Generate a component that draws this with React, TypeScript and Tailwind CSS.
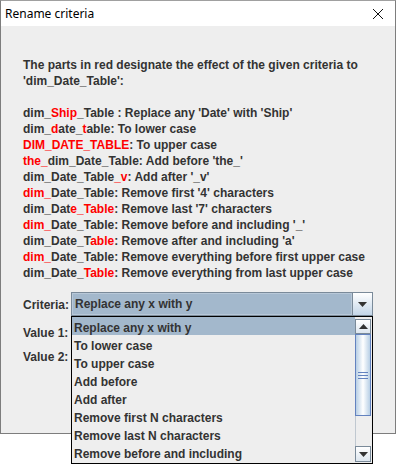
import React from 'react';

const R = ({ children }: { children: React.ReactNode }) => <span className="text-[#ff0000]">{children}</span>;

function Tri({ up }: { up?: boolean }) {
  return (
    <svg width="9" height="5" viewBox="0 0 9 5" className="block">
      {up ? <path d="M0 5 L4.5 0 L9 5 Z" fill="#333" /> : <path d="M0 0 L9 0 L4.5 5 Z" fill="#333" />}
    </svg>
  );
}

export default function App() {
  const lines: React.ReactNode[] = [
    <>dim_<R>Ship</R>_Table : Replace any 'Date' with 'Ship'</>,
    <>dim_<R>d</R>ate_<R>t</R>able: To lower case</>,
    <><R>DIM_DATE_TABLE</R>: To upper case</>,
    <><R>the_</R>dim_Date_Table: Add before 'the_'</>,
    <>dim_Date_Table<R>_v</R>: Add after '_v'</>,
    <><R>dim_</R>Date_Table: Remove first '4' characters</>,
    <>dim_Dat<R>e_Table</R>: Remove last '7' characters</>,
    <><R>dim_</R>Date_Table: Remove before and including '_'</>,
    <>dim_Date_T<R>able</R>: Remove after and including 'a'</>,
    <><R>dim_</R>Date_Table: Remove everything before first upper case</>,
    <>dim_Date_<R>Table</R>: Remove everything from last upper case</>,
  ];

  const items = [
    'Replace any x with y',
    'To lower case',
    'To upper case',
    'Add before',
    'Add after',
    'Remove first N characters',
    'Remove last N characters',
    'Remove before and including',
  ];

  return (
    <div className="relative w-[396px] h-[464px] bg-white overflow-hidden font-['Liberation_Sans',Arial,sans-serif]">
      {/* Dialog window */}
      <div className="w-[396px] h-[434px] border border-[#7d7d7d] border-t-[#a0a0a0] flex flex-col">
        {/* Title bar */}
        <div className="h-[25px] bg-white flex items-center justify-between pl-[4px] pr-[11px]">
          <span className="text-[12px] text-black font-['Noto_Sans',sans-serif] leading-none">Rename criteria</span>
          <svg width="12" height="12" viewBox="0 0 12 12">
            <path d="M1 1 L11 11 M11 1 L1 11" stroke="#111" strokeWidth="1" />
          </svg>
        </div>
        {/* Body */}
        <div className="flex-1 bg-[#eeeeee] pl-[22px] pt-[31px] text-[#333333] text-[12px] font-bold leading-[16px]">
          <div>The parts in red designate the effect of the given criteria to</div>
          <div>'dim_Date_Table':</div>
          <div className="h-[16px]" />
          {lines.map((l, i) => (
            <div key={i} className="whitespace-nowrap">{l}</div>
          ))}

          {/* Criteria row */}
          <div className="mt-[11px] flex items-center h-[24px]">
            <span className="w-[48px] pt-[1px]">Criteria:</span>
            <div className="w-[302px] h-[24px] border border-[#7a8a99] flex">
              <div className="flex-1 bg-[#a3b8cc] border border-[#b8c8d8] flex items-center pl-[2px]">Replace any x with y</div>
              <div className="w-[20px] border-l border-[#7a8a99] bg-gradient-to-b from-white to-[#c4d6e8] flex items-center justify-center">
                <Tri />
              </div>
            </div>
          </div>
          <div className="mt-[5px] h-[24px] flex items-center">Value 1:</div>
          <div className="h-[24px] flex items-center">Value 2:</div>
        </div>
      </div>

      {/* Popup list */}
      <div className="absolute left-[71px] top-[316px] w-[302px] h-[148px] border border-black bg-[#eeeeee] flex text-[#333333] text-[12px] font-bold">
        <div className="flex-1 flex flex-col">
          {items.map((it, i) => (
            <div
              key={it}
              className={`h-[18px] flex items-center pt-[3px] pl-[2px] whitespace-nowrap ${i === 0 ? 'bg-[#a3b8cc]' : ''}`}
            >
              {it}
            </div>
          ))}
        </div>
        <div className="w-[17px] flex flex-col pt-[2px] pb-[1px] pr-[1px]">
          <div className="h-[15px] border border-[#7a8a99] bg-gradient-to-b from-white to-[#dde6ef] flex items-center justify-center">
            <Tri up />
          </div>
          <div className="h-[82px] border border-[#6382bf] bg-gradient-to-r from-[#b8cfe5] via-white to-[#b8cfe5] flex flex-col items-center justify-center gap-[2px]">
            <div className="w-[10px] h-[1px] bg-[#6382bf]" />
            <div className="w-[10px] h-[1px] bg-[#6382bf]" />
            <div className="w-[10px] h-[1px] bg-[#6382bf]" />
          </div>
          <div className="flex-1 border-l border-[#c0c8d0] bg-[#eeeeee]" />
          <div className="h-[16px] border border-[#7a8a99] bg-gradient-to-b from-white to-[#dde6ef] flex items-center justify-center">
            <Tri />
          </div>
        </div>
      </div>
    </div>
  );
}
